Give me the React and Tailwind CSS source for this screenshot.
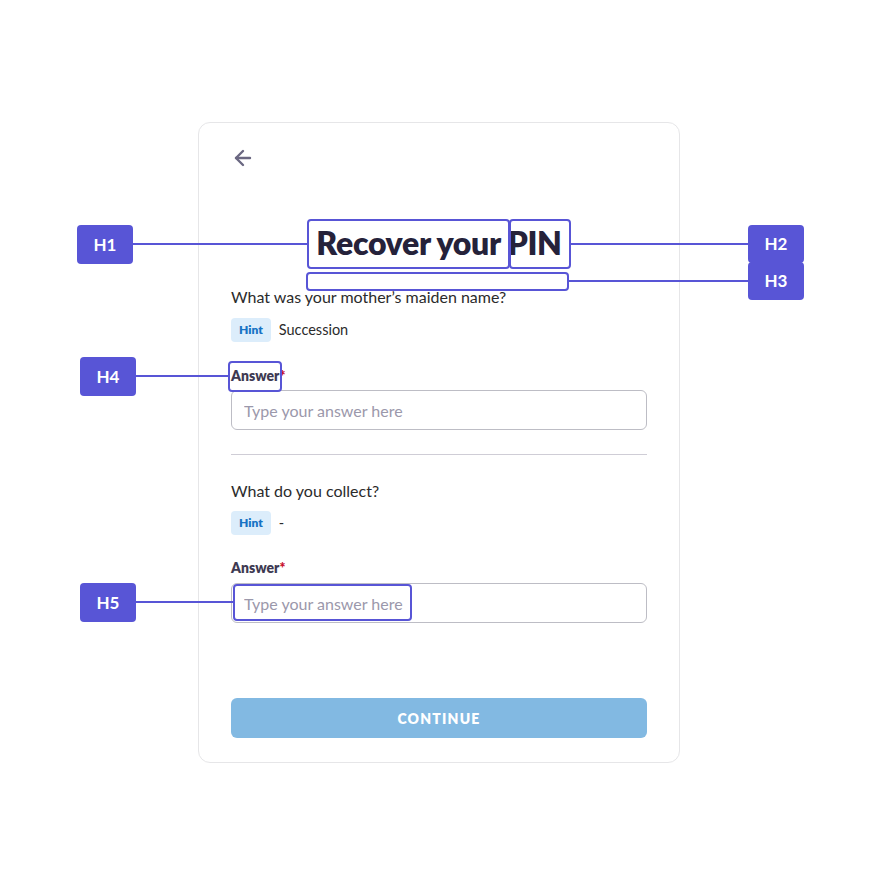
import React from "react";
import { ArrowLeft } from "lucide-react";

function Label({ text, x, y, w = 56, h = 39 }) {
  return (
    <div
      className="absolute flex items-center justify-center rounded-[4px] bg-[#5855d6] text-white text-[17px] font-bold"
      style={{ left: x, top: y, width: w, height: h }}
    >
      {text}
    </div>
  );
}

function Box({ x, y, w, h }) {
  return (
    <div
      className="absolute rounded-[4px] border-2 border-[#5855d6]"
      style={{ left: x, top: y, width: w, height: h }}
    />
  );
}

function HLine({ x1, x2, y }) {
  return <div className="absolute h-[2px] bg-[#5855d6]" style={{ left: x1, top: y - 1, width: x2 - x1 }} />;
}

function Hint({ text }) {
  return (
    <div className="flex items-center gap-2 h-6">
      <span className="h-6 px-2 flex items-center rounded-[4px] bg-[#dcedfb] text-[#1773c4] text-[12px] font-extrabold">Hint</span>
      <span className="text-[14.5px] text-[#2b2b2b]">{text}</span>
    </div>
  );
}

function Question({ text, answerGap }) {
  return (
    <div className="flex flex-col">
      <p className="h-6 leading-6 text-[16px] text-[#2b2b2b]">{text}</p>
      <div className={answerGap.hint}>
        <Hint text={answerGap.hintText} />
      </div>
      <div className={`${answerGap.label} h-5 leading-5 text-[14px] font-extrabold text-[#3e3a52]`}>
        Answer<span className="text-[#c8102e]">*</span>
      </div>
      <input
        className={`${answerGap.input} h-10 w-full rounded-[6px] border border-[#bdbdc5] px-3 text-[16px] text-[#2b2b2b] placeholder:text-[#9b98ab] outline-none`}
        placeholder="Type your answer here"
      />
    </div>
  );
}

export default function App() {
  return (
    <div className="relative w-[877px] h-[883px] bg-white overflow-hidden" style={{ fontFamily: "Lato, 'Noto Sans', sans-serif" }}>
      <div className="pt-[122px] pl-[198px]">
        <div className="w-[482px] rounded-[12px] border border-[#e6e6e8] px-8 pt-[23px] pb-6 flex flex-col">
          <ArrowLeft size={24} strokeWidth={2.4} color="#6b6882" />
          <h1 className="mt-[54px] h-[38px] leading-[38px] text-center text-[32px] font-extrabold text-[#25223a] tracking-[-0.3px]">
            Recover your PIN
          </h1>
          <div className="mt-[23px]">
            <Question
              text="What was your mother’s maiden name?"
              answerGap={{ hint: "mt-[9px]", hintText: "Succession", label: "mt-6", input: "mt-1" }}
            />
          </div>
          <div className="mt-6 h-px bg-[#cfcdd6]" />
          <div className="mt-6">
            <Question
              text="What do you collect?"
              answerGap={{ hint: "mt-2", hintText: "-", label: "mt-[23px]", input: "mt-[5px]" }}
            />
          </div>
          <button className="mt-[75px] h-10 w-full rounded-[6px] bg-[#82b9e2] text-white text-[14px] font-extrabold tracking-[1.2px]">
            CONTINUE
          </button>
        </div>
      </div>

      <HLine x1={133} x2={308} y={244} />
      <HLine x1={570} x2={749} y={244} />
      <HLine x1={568} x2={749} y={281} />
      <HLine x1={136} x2={229} y={376} />
      <HLine x1={136} x2={234} y={602} />

      <Box x={307} y={219} w={203} h={50} />
      <Box x={509} y={219} w={62} h={50} />
      <Box x={306} y={272} w={263} h={19} />
      <Box x={228} y={361} w={54} h={31} />
      <Box x={233} y={584} w={179} h={37} />

      <Label text="H1" x={77} y={225} />
      <Label text="H2" x={748} y={225} h={38} />
      <Label text="H3" x={748} y={262} h={38} />
      <Label text="H4" x={80} y={357} />
      <Label text="H5" x={80} y={583} />
    </div>
  );
}
